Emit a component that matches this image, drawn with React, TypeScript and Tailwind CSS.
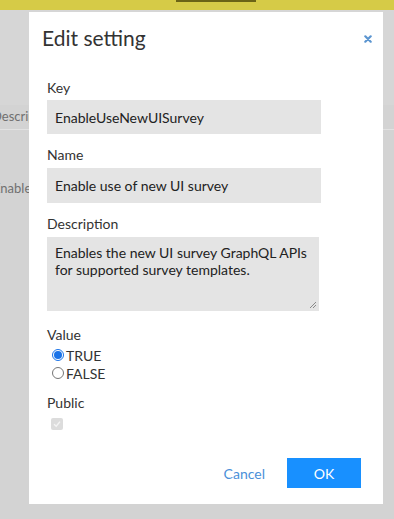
import React from "react";

const font = { fontFamily: "Lato, 'Open Sans', sans-serif" };

export default function App() {
  return (
    <div
      className="relative h-[519px] w-full overflow-hidden bg-[#d3d3d3] text-[#333]"
      style={font}
    >
      {/* page behind the overlay */}
      <div className="h-[10px] bg-[#d6cb47] flex justify-center">
        <div className="ml-[38px] h-[2px] w-[80px] bg-[#6b6416]" />
      </div>
      <div className="flex flex-col">
        <div className="h-[95px] bg-[#d6d6d6]" />
        <div className="flex items-center h-[25px] border-b border-[#e2e2e2] text-[13px] text-[#707070]">
          <span className="-ml-[8px]">Description</span>
        </div>
        <div className="flex items-center justify-between h-[118px] text-[13px] text-[#707070]">
          <span className="-ml-[7px]">Enable use</span>
          <span className="-mr-[40px]">Server</span>
        </div>
      </div>

      {/* modal */}
      <div className="absolute left-[29px] top-[12px] w-[354px] bg-white pt-[12px] pb-[16px]">
        <div className="flex items-center justify-between pl-[13px] pr-[11px]">
          <h2 className="text-[21px] leading-[28px] text-[#333]">Edit setting</h2>
          <svg width="8" height="8" viewBox="0 0 8 8" className="mt-[2px]">
            <path d="M1.3 1.3 L6.7 6.7 M6.7 1.3 L1.3 6.7" stroke="#5b95d0" strokeWidth="2.2" strokeLinecap="round" />
          </svg>
        </div>

        <div className="pl-[18px] pr-[62px]">
          <label className="mt-[26px] block text-[14px] leading-[20px]">Key</label>
          <div className="mt-[2px] flex h-[34px] items-center bg-[#e4e4e4] px-[8px] text-[14px] text-[#222]">
            EnableUseNewUISurvey
          </div>

          <label className="mt-[11px] block text-[14px] leading-[20px]">Name</label>
          <div className="mt-[3px] flex h-[35px] items-center bg-[#e4e4e4] px-[8px] text-[14px] text-[#222]">
            Enable use of new UI survey
          </div>

          <label className="mt-[11px] block text-[14px] leading-[20px]">Description</label>
          <div className="relative mt-[3px] mr-[2px] h-[74px] bg-[#e4e4e4] px-[8px] pt-[7px] text-[14px] leading-[17px] text-[#222]">
            Enables the new UI survey GraphQL APIs for supported survey templates.
            <svg width="8" height="8" viewBox="0 0 8 8" className="absolute bottom-[2px] right-[2px]">
              <path d="M7 1 L1 7 M7 4 L4 7" stroke="#8a8a8a" strokeWidth="1" />
            </svg>
          </div>

          <label className="mt-[14px] block text-[14px] leading-[20px]">Value</label>
          <div className="mt-[1px] flex h-[18px] items-center gap-[2px] pl-[5px] text-[14px]">
            <span className="flex h-[12px] w-[12px] items-center justify-center rounded-full border border-[#1a73e8]">
              <span className="h-[8px] w-[8px] rounded-full bg-[#1a73e8]" />
            </span>
            <span>TRUE</span>
          </div>
          <div className="flex h-[18px] items-center gap-[2px] pl-[5px] text-[14px]">
            <span className="h-[12px] w-[12px] rounded-full border border-[#767676]" />
            <span>FALSE</span>
          </div>

          <label className="mt-[11px] block text-[14px] leading-[20px]">Public</label>
          <div className="mt-[5px] ml-[4px] flex h-[12px] w-[12px] items-center justify-center rounded-[2px] bg-[#dcdcdc]">
            <svg width="8" height="8" viewBox="0 0 8 8">
              <path d="M1 4.2 L3.2 6.3 L7 1.6" fill="none" stroke="#f4f4f4" strokeWidth="1.4" />
            </svg>
          </div>
        </div>

        <div className="mt-[28px] flex items-center justify-end pr-[22px]">
          <button className="mr-[22px] text-[14px] text-[#4a90d9]">Cancel</button>
          <button className="h-[30px] w-[74px] bg-[#1890ff] text-[14px] text-white">OK</button>
        </div>
      </div>
    </div>
  );
}
